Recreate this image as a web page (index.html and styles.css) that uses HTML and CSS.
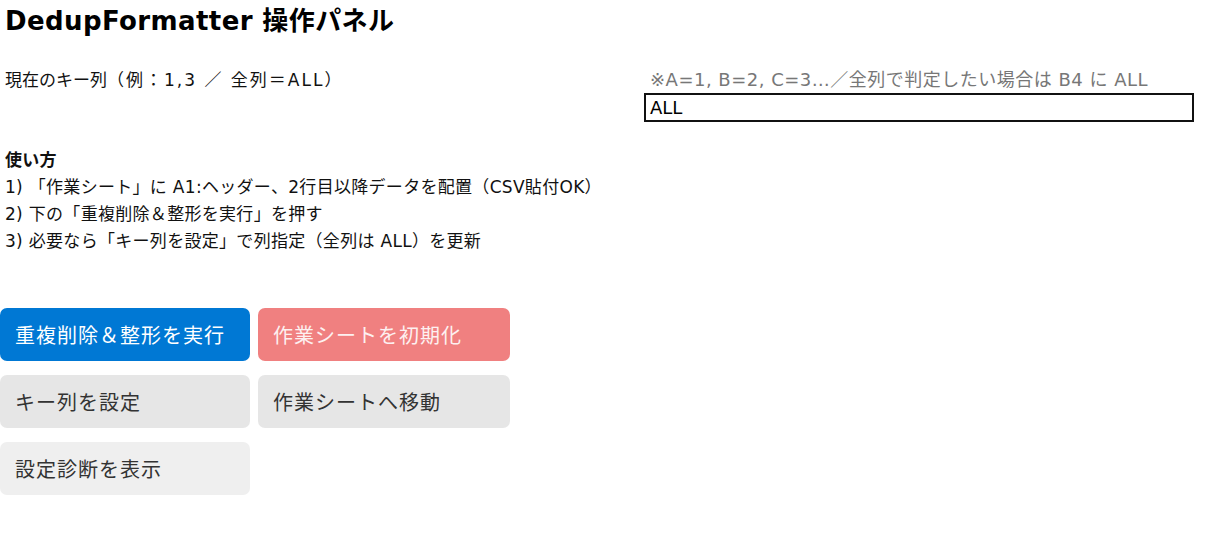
FILE: index.html
```html
<!DOCTYPE html>
<html lang="ja">
<head>
<meta charset="utf-8">
<title>DedupFormatter 操作パネル</title>
<link rel="stylesheet" href="styles.css">
</head>
<body>
<h1 class="title">DedupFormatter 操作パネル</h1>
<div class="key-row">
  <div class="key-label">現在のキー列<span class="key-example">（例：1,3 ／ 全列＝ALL）</span></div>
  <div class="key-field">
    <div class="hint">※A=1, B=2, C=3…／全列で判定したい場合は B4 に ALL</div>
    <div class="input">ALL</div>
  </div>
</div>
<div class="usage">
  <div class="usage-head">使い方</div>
  <div>1) 「作業シート」に A1:ヘッダー、2行目以降データを配置（CSV貼付OK）</div>
  <div>2) 下の「重複削除＆整形を実行」を押す</div>
  <div>3) 必要なら「キー列を設定」で列指定（全列は ALL）を更新</div>
</div>
<div class="buttons">
  <button class="btn primary">重複削除＆整形を実行</button>
  <button class="btn danger">作業シートを初期化</button>
  <button class="btn gray">キー列を設定</button>
  <button class="btn gray">作業シートへ移動</button>
  <button class="btn light">設定診断を表示</button>
</div>
</body>
</html>
```
FILE: styles.css
```css
html, body {
  margin: 0;
  padding: 0;
  background: #fff;
}
body {
  font-family: "DejaVu Sans", "Noto Sans CJK JP", sans-serif;
  color: #111;
  font-size: 17px;
}
.title {
  margin: 0;
  padding-left: 5px;
  font-size: 26px;
  line-height: 42px;
  font-weight: 700;
  letter-spacing: 0.4px;
  color: #000;
}
.key-row {
  display: grid;
  grid-template-columns: 639px 550px;
  margin-top: 25px;
  padding-left: 5px;
}
.key-label {
  line-height: 26px;
}
.key-example {
  letter-spacing: 2px;
}
.hint {
  line-height: 26px;
  color: #777;
  font-size: 18px;
  letter-spacing: 0.5px;
  padding-left: 6px;
}
.input {
  box-sizing: border-box;
  height: 29px;
  border: 2px solid #111;
  padding-left: 4px;
  line-height: 25px;
  font-size: 18px;
  color: #000;
}
.usage {
  margin-top: 25px;
  padding-left: 5px;
  line-height: 27px;
  letter-spacing: 0.3px;
}
.usage-head {
  font-weight: 700;
}
.buttons {
  display: grid;
  grid-template-columns: 250px 252px;
  column-gap: 8px;
  row-gap: 14px;
  margin-top: 53px;
}
.btn {
  height: 53px;
  border: none;
  border-radius: 7px;
  padding: 0 0 0 15px;
  text-align: left;
  font-family: "Noto Sans CJK JP", "Noto Sans", sans-serif;
  font-size: 20px;
  letter-spacing: 1px;
  font-weight: 400;
}
.primary {
  background: #0078d4;
  color: #fff;
}
.danger {
  background: #f08080;
  color: #fdf0f0;
}
.gray {
  background: #e6e6e6;
  color: #333;
}
.light {
  background: #efefef;
  color: #333;
}
```
